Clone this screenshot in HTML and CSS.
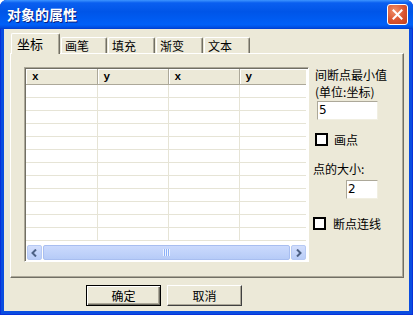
FILE: index.html
```html
<!DOCTYPE html>
<html lang="zh-CN">
<head>
<meta charset="UTF-8">
<title>对象的属性</title>
<link rel="stylesheet" href="styles.css">
</head>
<body>
<div class="window">
  <div class="titlebar">
    <span class="title">对象的属性</span>
    <span class="close">
      <svg width="11" height="11" viewBox="0 0 11 11"><path d="M1.5 1.5 L9.5 9.5 M9.5 1.5 L1.5 9.5" stroke="#fff" stroke-width="2" stroke-linecap="square"/></svg>
    </span>
  </div>
  <div class="client">
    <div class="tabs">
      <div class="tab active">坐标</div>
      <div class="tab">画笔</div>
      <div class="tab">填充</div>
      <div class="tab">渐变</div>
      <div class="tab">文本</div>
    </div>
    <div class="panel">
      <div class="grid">
        <div class="table-wrap">
          <table>
            <colgroup><col class="c1"><col class="c1"><col class="c1"><col></colgroup>
            <thead><tr><th>x</th><th>y</th><th>x</th><th>y</th></tr></thead>
            <tbody>
              <!-- blank rows -->
              <tr><td></td><td></td><td></td><td></td></tr>
              <tr><td></td><td></td><td></td><td></td></tr>
              <tr><td></td><td></td><td></td><td></td></tr>
              <tr><td></td><td></td><td></td><td></td></tr>
              <tr><td></td><td></td><td></td><td></td></tr>
              <tr><td></td><td></td><td></td><td></td></tr>
              <tr><td></td><td></td><td></td><td></td></tr>
              <tr><td></td><td></td><td></td><td></td></tr>
              <tr><td></td><td></td><td></td><td></td></tr>
              <tr><td></td><td></td><td></td><td></td></tr>
              <tr><td></td><td></td><td></td><td></td></tr>
              <tr><td></td><td></td><td></td><td></td></tr>
            </tbody>
          </table>
        </div>
        <div class="hscroll">
          <div class="sbtn">
            <svg width="7" height="8" viewBox="0 0 7 8"><path d="M5 0.5 L1.5 4 L5 7.5" fill="none" stroke="#4d6185" stroke-width="2"/></svg>
          </div>
          <div class="thumb"><span class="grip"></span></div>
          <div class="sbtn">
            <svg width="7" height="8" viewBox="0 0 7 8"><path d="M2 0.5 L5.5 4 L2 7.5" fill="none" stroke="#4d6185" stroke-width="2"/></svg>
          </div>
        </div>
      </div>
      <div class="side">
        <div class="label">间断点最小值</div>
        <div class="label">(单位:坐标)</div>
        <div class="edit wide">5</div>
        <div class="check"><span class="box"></span>画点</div>
        <div class="label size">点的大小:</div>
        <div class="edit narrow">2</div>
        <div class="check second"><span class="box"></span>断点连线</div>
      </div>
    </div>
    <div class="buttons">
      <button class="btn default">确定</button>
      <button class="btn">取消</button>
    </div>
  </div>
</div>
</body>
</html>
```

FILE: styles.css
```css
body {
  margin: 0;
  background: #fff;
  font-family: "Noto Sans CJK SC", "DejaVu Sans", sans-serif;
  font-size: 12px;
  color: #000;
}
.window {
  width: 413px;
  height: 315px;
  display: flex;
  flex-direction: column;
  background: #0a4de0;
  border-radius: 7px 7px 0 0;
  box-shadow: inset 1px 0 #0831d9, inset -1px 0 #0831d9, inset 0 -1px #0831d9;
}
.titlebar {
  height: 29px;
  display: flex;
  align-items: center;
  justify-content: space-between;
  padding: 0 5px 0 7px;
  border-radius: 7px 7px 0 0;
  background: linear-gradient(#3d95ff 0, #0a5ff0 10%, #0055e8 40%, #0060f8 85%, #0052e6 93%, #003dd0 100%);
}
.title {
  color: #fff;
  font-weight: bold;
  font-size: 14px;
  text-shadow: 1px 1px #0a1e80;
  margin-top: -1px;
}
.close {
  width: 21px;
  height: 21px;
  box-sizing: border-box;
  border: 1px solid #fff;
  border-radius: 3px;
  background: radial-gradient(circle at 35% 30%, #f0906a, #d9532f 55%, #c1401c);
  display: flex;
  align-items: center;
  justify-content: center;
}
.client {
  flex: 1;
  margin: 0 4px 4px;
  background: #ece9d8;
}
.tabs {
  display: flex;
  align-items: flex-end;
  height: 20px;
  margin-top: 4px;
  padding-left: 7px;
  position: relative;
  z-index: 1;
}
.tab {
  width: 46px;
  height: 16px;
  box-sizing: border-box;
  margin-left: 1px;
  padding: 1px 0 0 3px;
  line-height: 14px;
  border-top: 1px solid #fff;
  border-left: 1px solid #fff;
  border-right: 1px solid #716f64;
  box-shadow: inset -1px 0 #aca899;
  border-radius: 2px 2px 0 0;
  font-size: 12px;
}
.tab:nth-child(3), .tab:nth-child(4) {
  width: 47px;
}
.tab.active {
  width: 49px;
  height: 21px;
  margin: 0 0 -1px;
  padding: 3px 0 0 5px;
  font-size: 13px;
  background: #ece9d8;
}
.panel {
  height: 225px;
  box-sizing: border-box;
  margin: 0 5px 0 6px;
  padding: 13px 0 0 13px;
  display: flex;
  gap: 6px;
  border: 1px solid;
  border-color: #fff #716f64 #716f64 #fff;
  box-shadow: inset -1px -1px #aca899;
}
.grid {
  width: 285px;
  height: 195px;
  box-sizing: border-box;
  border: 1px solid;
  border-color: #aca899 #fff #fff #aca899;
  padding: 1px 2px 1px 1px;
  box-shadow: inset 1px 1px #716f64;
  background: #fff;
  display: flex;
  flex-direction: column;
}
.table-wrap {
  flex: 1;
  overflow: hidden;
}
table {
  width: 281px;
  table-layout: fixed;
  border-collapse: collapse;
}
col.c1 {
  width: 71px;
}
th {
  height: 15px;
  padding: 0 0 0 6px;
  text-align: left;
  font-family: "Liberation Mono", monospace;
  font-size: 11px;
  font-weight: bold;
  line-height: 14px;
  background: #ece9d8;
  border-right: 1px solid #aca899;
  border-bottom: 1px solid #aca899;
  box-shadow: inset 1px 1px #fff;
}
td {
  height: 12px;
  padding: 0;
  border-right: 1px solid #e6e4d6;
  border-bottom: 1px solid #e6e4d6;
}
.hscroll {
  height: 15px;
  display: flex;
  gap: 1px;
  padding-left: 1px;
  background: #fefefb;
}
.sbtn {
  width: 15px;
  height: 15px;
  box-sizing: border-box;
  border: 1px solid #b6c9f4;
  border-radius: 2px;
  background: linear-gradient(#d2defc, #b9cdf8);
  display: flex;
  align-items: center;
  justify-content: center;
}
.thumb {
  flex: 1;
  box-sizing: border-box;
  border: 1px solid #a8bef0;
  border-radius: 2px;
  background: linear-gradient(#cbdafd, #b6cbf7);
  display: flex;
  align-items: center;
  justify-content: center;
}
.grip {
  width: 7px;
  height: 7px;
  background: repeating-linear-gradient(90deg, #eef4fe 0 1px, #8cb0f8 1px 2px);
}
.side {
  flex: 1;
}
.label {
  line-height: 17px;
  white-space: nowrap;
}
.side > .label:first-child {
  margin-top: -1px;
}
.edit {
  height: 19px;
  box-sizing: border-box;
  border: 1px solid;
  border-color: #aca899 #f1efe2 #f1efe2 #aca899;
  background: #fff;
  padding-left: 1px;
  line-height: 17px;
  font-family: "DejaVu Sans", sans-serif;
  font-size: 12px;
}
.edit.wide {
  width: 61px;
  margin: 1px 0 0 2px;
}
.edit.narrow {
  width: 32px;
  margin: 3px 0 0 31px;
}
.check {
  display: flex;
  align-items: center;
  gap: 6px;
  margin-top: 12px;
  height: 14px;
}
.check.second {
  margin: 17px 0 0 -2px;
  gap: 7px;
}
.box {
  width: 13px;
  height: 13px;
  box-sizing: border-box;
  border: 2px solid #000;
  background: #fff;
}
.label.size {
  margin: 14px 0 0 -2px;
}
.buttons {
  display: flex;
  gap: 6px;
  padding-left: 82px;
  margin-top: 7px;
}
.btn {
  width: 75px;
  height: 21px;
  padding: 0;
  font-family: "Noto Sans CJK SC", sans-serif;
  font-size: 12px;
  color: #000;
  background: #ece9d8;
  border: 1px solid;
  border-color: #fff #404040 #404040 #fff;
  box-shadow: inset -1px -1px #aca899;
}
.btn.default {
  border: 1px solid #000;
  box-shadow: inset 1px 1px #fff, inset -1px -1px #716f64, inset -2px -2px #aca899;
}
```
